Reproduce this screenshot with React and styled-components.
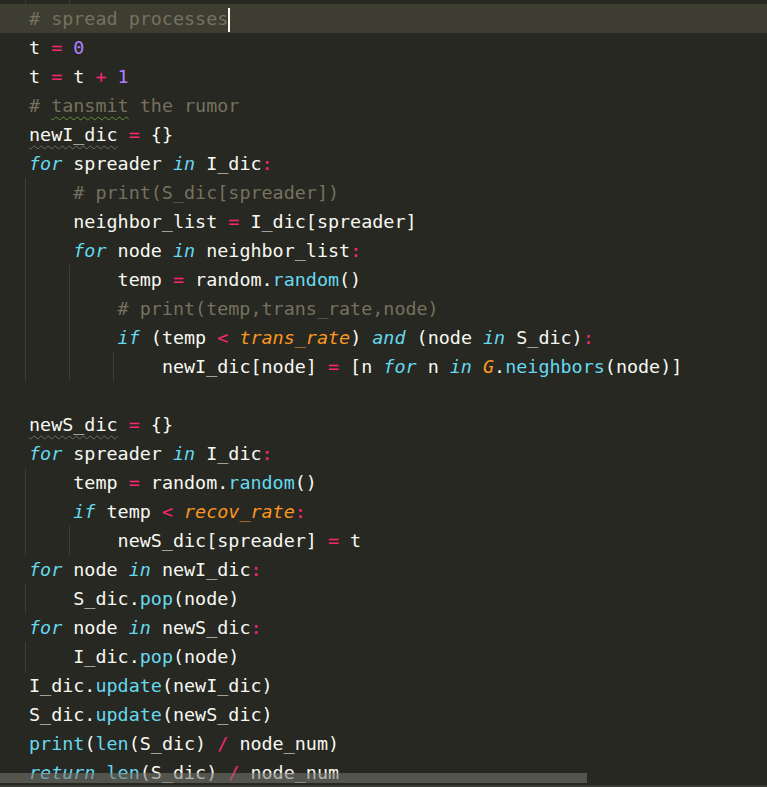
import styled, { createGlobalStyle } from "styled-components";

const GlobalStyle = createGlobalStyle`
	html, body {
		margin: 0;
		padding: 0;
		background: #272822;
		overflow: hidden;
	}
`;

const colors = {
	t: "#f8f8f2",
	c: "#75715e",
	o: "#f92672",
	n: "#ae81ff",
	k: "#66d9ef",
	f: "#66d9ef",
	p: "#fd971f",
};

const guideBg = (count) => {
	if (!count) return "none";
	const list = [];
	for (let i = 0; i < count; i++) list.push("linear-gradient(#3d3e37, #3d3e37)");
	return list.join(", ");
};

const guidePos = (count) => {
	const list = [];
	for (let i = 0; i < count; i++) list.push(`${25 + i * 44}px 0`);
	return list.join(", ") || "0 0";
};

// each line: [indent, guides, tokens, current]
const lines = [
	[0, 0, [["c", "# spread processes"]], true],
	[0, 0, [["t", "t "], ["o", "="], ["t", " "], ["n", "0"]]],
	[0, 0, [["t", "t "], ["o", "="], ["t", " t "], ["o", "+"], ["t", " "], ["n", "1"]]],
	[0, 0, [["c", "# "], ["cs", "tansmit"], ["c", " the rumor"]]],
	[0, 0, [["w", "newI_dic"], ["t", " "], ["o", "="], ["t", " {}"]]],
	[0, 0, [["k", "for"], ["t", " spreader "], ["k", "in"], ["t", " I_dic"], ["o", ":"]]],
	[1, 1, [["c", "# print(S_dic[spreader])"]]],
	[1, 1, [["t", "neighbor_list "], ["o", "="], ["t", " I_dic[spreader]"]]],
	[1, 1, [["k", "for"], ["t", " node "], ["k", "in"], ["t", " neighbor_list"], ["o", ":"]]],
	[2, 2, [["t", "temp "], ["o", "="], ["t", " random."], ["f", "random"], ["t", "()"]]],
	[2, 2, [["c", "# print(temp,trans_rate,node)"]]],
	[2, 2, [["k", "if"], ["t", " (temp "], ["o", "<"], ["t", " "], ["p", "trans_rate"], ["t", ") "], ["k", "and"], ["t", " (node "], ["k", "in"], ["t", " S_dic)"], ["o", ":"]]],
	[3, 3, [["t", "newI_dic[node] "], ["o", "="], ["t", " [n "], ["k", "for"], ["t", " n "], ["k", "in"], ["t", " "], ["p", "G"], ["t", "."], ["f", "neighbors"], ["t", "(node)]"]]],
	[0, 0, []],
	[0, 0, [["w", "newS_dic"], ["t", " "], ["o", "="], ["t", " {}"]]],
	[0, 0, [["k", "for"], ["t", " spreader "], ["k", "in"], ["t", " I_dic"], ["o", ":"]]],
	[1, 1, [["t", "temp "], ["o", "="], ["t", " random."], ["f", "random"], ["t", "()"]]],
	[1, 1, [["k", "if"], ["t", " temp "], ["o", "<"], ["t", " "], ["p", "recov_rate"], ["o", ":"]]],
	[2, 2, [["t", "newS_dic[spreader] "], ["o", "="], ["t", " t"]]],
	[0, 0, [["k", "for"], ["t", " node "], ["k", "in"], ["t", " newI_dic"], ["o", ":"]]],
	[1, 1, [["t", "S_dic."], ["f", "pop"], ["t", "(node)"]]],
	[0, 0, [["k", "for"], ["t", " node "], ["k", "in"], ["t", " newS_dic"], ["o", ":"]]],
	[1, 1, [["t", "I_dic."], ["f", "pop"], ["t", "(node)"]]],
	[0, 0, [["t", "I_dic."], ["f", "update"], ["t", "(newI_dic)"]]],
	[0, 0, [["t", "S_dic."], ["f", "update"], ["t", "(newS_dic)"]]],
	[0, 0, [["f", "print"], ["t", "("], ["f", "len"], ["t", "(S_dic) "], ["o", "/"], ["t", " node_num)"]]],
	[0, 0, [["k", "return"], ["t", " "], ["f", "len"], ["t", "(S_dic) "], ["o", "/"], ["t", " node_num"]]],
];

const App = () => {
	return (
		<>
			<GlobalStyle />
			<StyledEditor>
				<StyledTopStrip $guides={2} />
				{lines.map(([indent, guides, tokens, current], i) => (
					<StyledLine key={i} $guides={guides} $current={current}>
						<span>{"    ".repeat(indent)}</span>
						{tokens.map(([kind, text], j) => {
							if (kind === "cs")
								return (
									<StyledToken key={j} $kind="c" $squiggle="#5c9a3c">
										{text}
									</StyledToken>
								);
							if (kind === "w")
								return (
									<StyledToken key={j} $kind="t" $squiggle="#6d6c60">
										{text}
									</StyledToken>
								);
							return (
								<StyledToken key={j} $kind={kind}>
									{text}
								</StyledToken>
							);
						})}
						{current && <StyledCaret />}
					</StyledLine>
				))}
				<StyledScrollTrack>
					<StyledScrollThumb />
				</StyledScrollTrack>
			</StyledEditor>
		</>
	);
};

export default App;

const StyledEditor = styled.div`
	position: relative;
	width: 767px;
	height: 787px;
	overflow: hidden;
	background: #272822;
	font-family: "DejaVu Sans Mono", "Liberation Mono", monospace;
	font-size: 18.4px;
	color: #f8f8f2;
`;

const StyledTopStrip = styled.div`
	height: 4px;
	background-image: ${(p) => guideBg(p.$guides)};
	background-repeat: no-repeat;
	background-size: 1px 100%;
	background-position: ${(p) => guidePos(p.$guides)};
`;

const StyledLine = styled.div`
	height: 29px;
	line-height: 29px;
	padding-left: 29px;
	white-space: pre;
	background-color: ${(p) => (p.$current ? "#3e3d32" : "transparent")};
	background-image: ${(p) => guideBg(p.$guides)};
	background-repeat: no-repeat;
	background-size: 1px 100%;
	background-position: ${(p) => guidePos(p.$guides)};
`;

const StyledToken = styled.span`
	color: ${(p) => colors[p.$kind]};
	font-style: ${(p) => (p.$kind === "k" || p.$kind === "p" ? "italic" : "normal")};
	text-decoration: ${(p) => (p.$squiggle ? `underline wavy ${p.$squiggle}` : "none")};
	text-decoration-thickness: 1px;
	text-underline-offset: 4px;
`;

const StyledCaret = styled.span`
	display: inline-block;
	width: 2px;
	height: 24px;
	vertical-align: middle;
	background: #f8f8f0;
	margin-right: -2px;
`;

const StyledScrollTrack = styled.div`
	position: absolute;
	left: 0;
	right: 0;
	bottom: 0;
	height: 15px;
	border-bottom: 2px solid #3a3b35;
	box-sizing: border-box;
	padding-top: 1px;
`;

const StyledScrollThumb = styled.div`
	width: 587px;
	height: 10px;
	background: rgba(120, 121, 112, 0.55);
`;
